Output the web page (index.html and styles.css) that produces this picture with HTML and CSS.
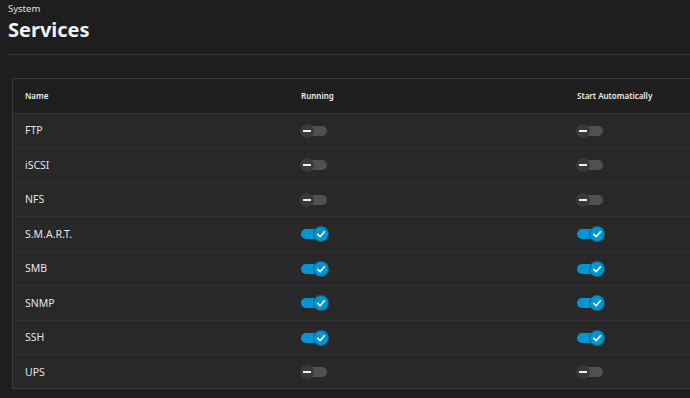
FILE: index.html
```html
<!DOCTYPE html>
<html lang="en">
<head>
    <meta charset="UTF-8">
    <meta name="viewport" content="width=device-width, initial-scale=1.0">
    <title>Services</title>
    <link rel="stylesheet" href="styles.css">
</head>
<body>
    <div class="page-header">
        <div class="breadcrumb">System</div>
        <h1>Services</h1>
    </div>

    <div class="content">
        <div class="card">
            <table class="services">
                <thead>
                    <tr>
                        <th>Name</th>
                        <th>Running</th>
                        <th>Start Automatically</th>
                    </tr>
                </thead>
                <tbody id="serviceRows"></tbody>
            </table>
        </div>
    </div>

    <script>
        const services = [
            { name: 'FTP', running: false, auto: false },
            { name: 'iSCSI', running: false, auto: false },
            { name: 'NFS', running: false, auto: false },
            { name: 'S.M.A.R.T.', running: true, auto: true },
            { name: 'SMB', running: true, auto: true },
            { name: 'SNMP', running: true, auto: true },
            { name: 'SSH', running: true, auto: true },
            { name: 'UPS', running: false, auto: false }
        ];

        function toggle(on) {
            const icon = on
                ? '<svg viewBox="0 0 14 14" width="14" height="14"><polyline points="3.8,7.4 6.2,9.7 10.4,4.8" fill="none" stroke="#fff" stroke-width="1.6" stroke-linecap="round" stroke-linejoin="round"/></svg>'
                : '<span class="dash"></span>';
            return `<span class="toggle ${on ? 'on' : 'off'}"><span class="track"></span><span class="knob">${icon}</span></span>`;
        }

        const rows = document.getElementById('serviceRows');
        services.forEach(function(s) {
            const tr = document.createElement('tr');
            tr.innerHTML = `
                <td>${s.name}</td>
                <td>${toggle(s.running)}</td>
                <td>${toggle(s.auto)}</td>
            `;
            rows.appendChild(tr);
        });
    </script>
</body>
</html>
```

FILE: styles.css
```css
html, body {
    margin: 0;
    background-color: #1e1e1e;
    color: #e6e6e6;
    font-family: "Noto Sans", "Open Sans", sans-serif;
    overflow: hidden;
}

.page-header {
    margin-left: 8px;
    padding-top: 2px;
    border-bottom: 1px solid #353535;
    height: 52px;
}

.breadcrumb {
    font-size: 9.5px;
    line-height: 13px;
    color: #e0e0e0;
}

h1 {
    margin: 2px 0 0;
    font-size: 20px;
    line-height: 26px;
    font-weight: 700;
    color: #f2f2f2;
}

.content {
    overflow: hidden;
    padding-bottom: 20px;
}

.card {
    margin: 23px 0 0 12px;
    width: 840px;
    border: 1px solid #3a3a3a;
    background: #282828;
}

.services {
    border-collapse: collapse;
    table-layout: fixed;
    width: 828px;
}

.services th,
.services td {
    width: 276px;
    padding: 0 0 0 12px;
    text-align: left;
    box-sizing: border-box;
}

.services th {
    height: 34px;
    font-size: 8px;
    font-weight: 600;
    color: #ececec;
    background: #1f1f1f;
    border-bottom: 1px solid #333;
}

.services td {
    height: 34.5px;
    font-size: 10.5px;
    color: #e4e4e4;
    border-bottom: 1px solid #333;
}

.services tr:last-child td {
    border-bottom: none;
    height: 33.5px;
}

.toggle {
    position: relative;
    display: inline-block;
    width: 27px;
    height: 14px;
    vertical-align: middle;
}

.track {
    position: absolute;
    left: 2px;
    top: 2px;
    width: 24px;
    height: 10px;
    border-radius: 5px;
}

.knob {
    position: absolute;
    top: 0;
    width: 14px;
    height: 14px;
    border-radius: 50%;
    display: flex;
    align-items: center;
    justify-content: center;
}

.off .track {
    background: #505050;
}

.off .knob {
    left: -1px;
    background: #393939;
}

.dash {
    width: 8px;
    height: 2px;
    background: #f0f0f0;
}

.on .track {
    left: 0;
    background: #0095d5;
}

.on .knob {
    left: 13px;
    background: #0095d5;
    box-shadow: 0 0 0 1px #1f5f80;
}
```
